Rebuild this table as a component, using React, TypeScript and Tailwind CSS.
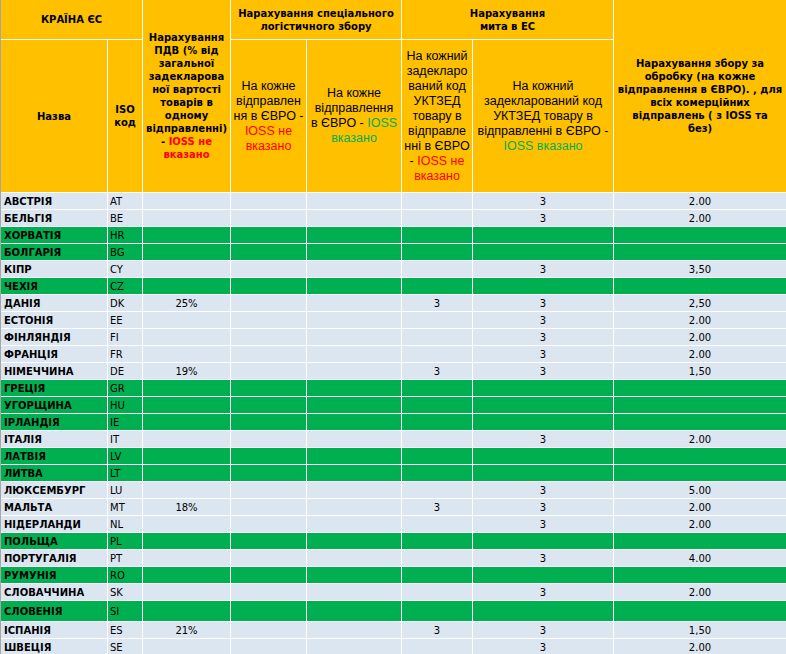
import React from 'react';

type Row = { n: string; c: string; v?: string; d1?: string; d2?: string; f?: string; g?: boolean };

const rows: Row[] = [
  { n: 'АВСТРІЯ', c: 'AT', d2: '3', f: '2.00' },
  { n: 'БЕЛЬГІЯ', c: 'BE', d2: '3', f: '2.00' },
  { n: 'ХОРВАТІЯ', c: 'HR', g: true },
  { n: 'БОЛГАРІЯ', c: 'BG', g: true },
  { n: 'КІПР', c: 'CY', d2: '3', f: '3,50' },
  { n: 'ЧЕХІЯ', c: 'CZ', g: true },
  { n: 'ДАНІЯ', c: 'DK', v: '25%', d1: '3', d2: '3', f: '2,50' },
  { n: 'ЕСТОНІЯ', c: 'EE', d2: '3', f: '2.00' },
  { n: 'ФІНЛЯНДІЯ', c: 'FI', d2: '3', f: '2.00' },
  { n: 'ФРАНЦІЯ', c: 'FR', d2: '3', f: '2.00' },
  { n: 'НІМЕЧЧИНА', c: 'DE', v: '19%', d1: '3', d2: '3', f: '1,50' },
  { n: 'ГРЕЦІЯ', c: 'GR', g: true },
  { n: 'УГОРЩИНА', c: 'HU', g: true },
  { n: 'ІРЛАНДІЯ', c: 'IE', g: true },
  { n: 'ІТАЛІЯ', c: 'IT', d2: '3', f: '2.00' },
  { n: 'ЛАТВІЯ', c: 'LV', g: true },
  { n: 'ЛИТВА', c: 'LT', g: true },
  { n: 'ЛЮКСЕМБУРГ', c: 'LU', d2: '3', f: '5.00' },
  { n: 'МАЛЬТА', c: 'MT', v: '18%', d1: '3', d2: '3', f: '2.00' },
  { n: 'НІДЕРЛАНДИ', c: 'NL', d2: '3', f: '2.00' },
  { n: 'ПОЛЬЩА', c: 'PL', g: true },
  { n: 'ПОРТУГАЛІЯ', c: 'PT', d2: '3', f: '4.00' },
  { n: 'РУМУНІЯ', c: 'RO', g: true },
  { n: 'СЛОВАЧЧИНА', c: 'SK', d2: '3', f: '2.00' },
  { n: 'СЛОВЕНІЯ', c: 'SI', g: true },
  { n: 'ІСПАНІЯ', c: 'ES', v: '21%', d1: '3', d2: '3', f: '1,50' },
  { n: 'ШВЕЦІЯ', c: 'SE', d2: '3', f: '2.00' },
];

const hb = "bg-[#FFC000] flex items-center justify-center text-center font-['DejaVu_Sans',sans-serif] font-bold text-[10px] leading-[13px] text-black";
const hr = "bg-[#FFC000] flex items-center justify-center text-center font-['Liberation_Sans',sans-serif] text-[12.5px] leading-[15px] text-black";
const red = 'text-[#FF0000]';
const grn = 'text-[#00B050]';

function L({ children }: { children: React.ReactNode }) {
  return <div className="whitespace-nowrap">{children}</div>;
}

export default function App() {
  return (
    <div className="w-[786px] h-[654px] overflow-hidden bg-white">
      <div className="grid grid-cols-[106px_34px_87px_75px_94px_70px_140px_172px] grid-rows-[39px_152px_repeat(24,16px)_20px_16px_16px] gap-px bg-white border-l border-[#a6a6a6]">
        <div className={`${hb} col-span-2`}>КРАЇНА ЄС</div>
        <div className={`${hb} row-span-2 flex-col`}>
          <L>Нарахування</L>
          <L>ПДВ (% від</L>
          <L>загальної</L>
          <L>задекларова</L>
          <L>ної вартості</L>
          <L>товарів в</L>
          <L>одному</L>
          <L>відправленні)</L>
          <L>
            - <span className={red}>IOSS не</span>
          </L>
          <L>
            <span className={red}>вказано</span>
          </L>
        </div>
        <div className={`${hb} col-span-2 flex-col`}>
          <L>Нарахування спеціального</L>
          <L>логістичного збору</L>
        </div>
        <div className={`${hb} col-span-2 flex-col`}>
          <L>Нарахування</L>
          <L>мита в ЕС</L>
        </div>
        <div className={`${hb} row-span-2 flex-col`}>
          <L>Нарахування збору за</L>
          <L>обробку (на кожне</L>
          <L>відправлення в ЄВРО). , для</L>
          <L>всіх комерційних</L>
          <L>відправлень ( з IOSS та</L>
          <L>без)</L>
        </div>

        <div className={hb}>Назва</div>
        <div className={`${hb} flex-col`}>
          <L>ISO</L>
          <L>код</L>
        </div>
        <div className={`${hr} flex-col`}>
          <L>На кожне</L>
          <L>відправлен</L>
          <L>ня в ЄВРО -</L>
          <L>
            <span className={red}>IOSS не</span>
          </L>
          <L>
            <span className={red}>вказано</span>
          </L>
        </div>
        <div className={`${hr} flex-col`}>
          <L>На кожне</L>
          <L>відправлення</L>
          <L>
            в ЄВРО - <span className={grn}>IOSS</span>
          </L>
          <L>
            <span className={grn}>вказано</span>
          </L>
        </div>
        <div className={`${hr} flex-col`}>
          <L>На кожний</L>
          <L>задекларо</L>
          <L>ваний код</L>
          <L>УКТЗЕД</L>
          <L>товару в</L>
          <L>відправле</L>
          <L>нні в ЄВРО</L>
          <L>
            - <span className={red}>IOSS не</span>
          </L>
          <L>
            <span className={red}>вказано</span>
          </L>
        </div>
        <div className={`${hr} flex-col`}>
          <L>На кожний</L>
          <L>задекларований код</L>
          <L>УКТЗЕД товару в</L>
          <L>відправленні в ЄВРО -</L>
          <L>
            <span className={grn}>IOSS вказано</span>
          </L>
        </div>

        {rows.map((r) => {
          const bg = r.g ? 'bg-[#00B050]' : 'bg-[#DCE6F1]';
          const base = `${bg} flex items-center pt-[2px] leading-[14px] text-[10px] text-black font-['DejaVu_Sans',sans-serif] overflow-hidden whitespace-nowrap`;
          return (
            <React.Fragment key={r.c}>
              <div className={`${base} font-bold pl-[3px]`}>{r.n}</div>
              <div className={`${base} pl-[2px]`}>{r.c}</div>
              <div className={`${base} justify-center`}>{r.v ?? ''}</div>
              <div className={base}></div>
              <div className={base}></div>
              <div className={`${base} justify-center`}>{r.d1 ?? ''}</div>
              <div className={`${base} justify-center`}>{r.d2 ?? ''}</div>
              <div className={`${base} justify-center`}>{r.f ?? ''}</div>
            </React.Fragment>
          );
        })}
      </div>
    </div>
  );
}
